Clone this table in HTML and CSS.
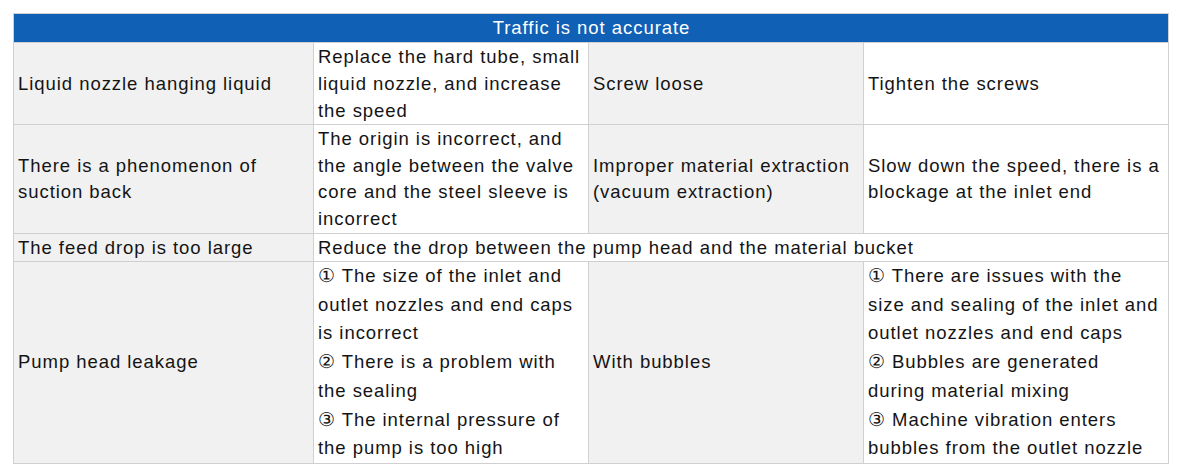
FILE: index.html
```html
<!DOCTYPE html>
<html>
<head>
<meta charset="utf-8">
<link rel="stylesheet" href="styles.css">
</head>
<body>
<table class="grid">
  <colgroup>
    <col class="c1"><col class="c2"><col class="c3"><col class="c4">
  </colgroup>
  <tr class="head"><th colspan="4">Traffic is not accurate</th></tr>
  <tr class="r1">
    <td class="gray">Liquid nozzle hanging liquid</td>
    <td>Replace the hard tube, small liquid nozzle, and increase the speed</td>
    <td class="gray">Screw loose</td>
    <td class="last">Tighten the screws</td>
  </tr>
  <tr class="r2">
    <td class="gray">There is a phenomenon of suction back</td>
    <td>The origin is incorrect, and the angle between the valve core and the steel sleeve is incorrect</td>
    <td class="gray">Improper material extraction (vacuum extraction)</td>
    <td class="last">Slow down the speed, there is a blockage at the inlet end</td>
  </tr>
  <tr class="r3">
    <td class="gray">The feed drop is too large</td>
    <td colspan="3">Reduce the drop between the pump head and the material bucket</td>
  </tr>
  <tr class="r4">
    <td class="gray">Pump head leakage</td>
    <td>① The size of the inlet and outlet nozzles and end caps is incorrect<br>② There is a problem with the sealing<br>③ The internal pressure of the pump is too high</td>
    <td class="gray">With bubbles</td>
    <td class="last">① There are issues with the size and sealing of the inlet and outlet nozzles and end caps<br>② Bubbles are generated during material mixing<br>③ Machine vibration enters bubbles from the outlet nozzle</td>
  </tr>
</table>
</body>
</html>
```
FILE: styles.css
```css
html, body { margin: 0; padding: 0; background: #fff; }
body { padding: 13px 0 0 13px; }
.grid {
  border-collapse: collapse;
  table-layout: fixed;
  width: 1155px;
  font-family: "Liberation Sans", Arial, sans-serif;
  font-size: 18.5px;
  letter-spacing: 0.95px;
  color: #141414;
}
.c1 { width: 300px; }
.c2 { width: 275px; }
.c3 { width: 275px; }
.c4 { width: 305px; }
.grid th, .grid td {
  border: 1px solid #d0d0d0;
  padding: 0 3px 0 4px;
  text-align: left;
  vertical-align: middle;
  line-height: 27px;
}
.grid td { background: #fff; }
.grid td.gray { background: #f1f1f1; }
.grid td.last { padding-right: 6.5px; }
.head th {
  background: #1060b6;
  color: #fff;
  font-weight: normal;
  text-align: center;
  height: 28px;
  line-height: 28px;
}
.r1 td { height: 79px; }
.r2 td { height: 108px; line-height: 26.5px; }
.r3 td { height: 27px; }
.r4 td { height: 201px; line-height: 28.7px; }
```
